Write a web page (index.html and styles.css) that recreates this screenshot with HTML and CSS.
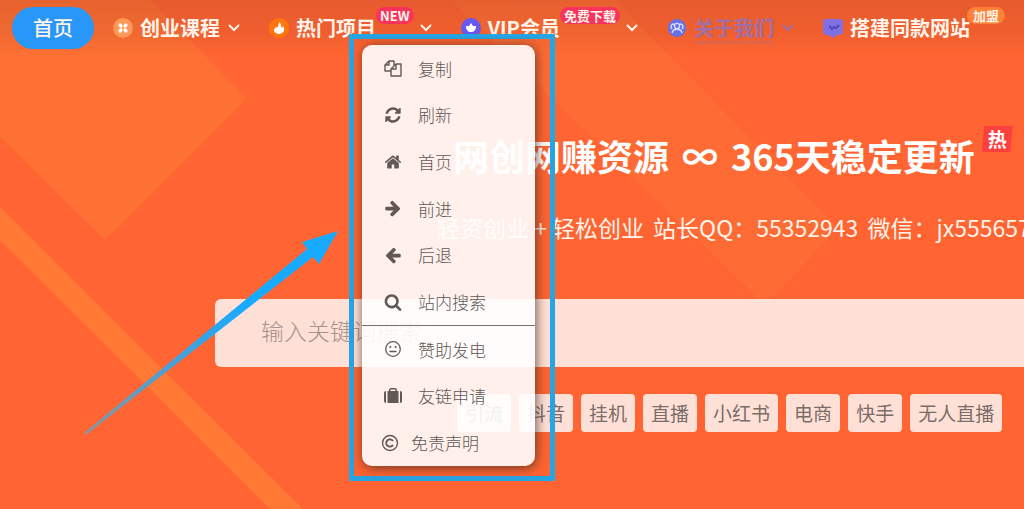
FILE: index.html
```html
<!DOCTYPE html>
<html lang="zh-CN">
<head>
<meta charset="utf-8">
<title>网创网赚资源</title>
<link rel="stylesheet" href="styles.css">
</head>
<body>
<svg class="backdrop" width="1024" height="509" viewBox="0 0 1024 509" aria-hidden="true">
  <path d="M0 0H150L247 98L105 240L0 137Z" fill="#ff7034"/>
  <path d="M0 207L303 509H270L0 240Z" fill="#ff7935"/>
  <path d="M450 0H615L838 228L766 306Z" fill="#ff6b34"/>
</svg>

<header class="topbar">
  <a class="home" href="#">首页</a>
  <nav>
    <ul class="menu">
      <li><a class="item" href="#">
        <svg class="icon" viewBox="0 0 20 20"><circle cx="10" cy="10" r="10" fill="#ff9857"/><path d="M7 7l1 1M13 7l-1 1M7 13l1-1M13 13l-1-1" stroke="#fff" stroke-width="3.2" stroke-linecap="round"/></svg>
        <span>创业课程</span>
        <svg class="chevron" viewBox="0 0 14 8"><path d="M2 1l5 5 5-5"/></svg></a></li>
      <li><a class="item" href="#">
        <svg class="icon" viewBox="0 0 20 20"><circle cx="10" cy="10" r="10" fill="#ff760c"/><path d="M10 4c4 3 1 5 3 6l1-2c3 4 0 8-4 8s-7-4-3-7l1 1c1-2 2-3 2-6z" fill="#fff"/></svg>
        <span>热门项目</span><em class="badge">NEW</em>
        <svg class="chevron" viewBox="0 0 14 8"><path d="M2 1l5 5 5-5"/></svg></a></li>
      <li><a class="item" href="#">
        <svg class="icon" viewBox="0 0 20 20"><circle cx="10" cy="10" r="10" fill="#6559ef"/><path d="M10 5l2 3 3 0c0 4-2 6-5 6s-5-2-5-6l3 0z" fill="#fff"/></svg>
        <span>VIP会员</span><em class="badge">免费下载</em>
        <svg class="chevron" viewBox="0 0 14 8"><path d="M2 1l5 5 5-5"/></svg></a></li>
      <li><a class="item current" href="#">
        <svg class="icon" viewBox="0 0 20 20"><circle cx="10" cy="10" r="9" fill="#6470e8"/><g fill="none" stroke="#dce0ff" stroke-width="1.3"><circle cx="10" cy="8" r="2.6"/><path d="M5 15c1-5 9-5 10 0M5 11c-2-2-1-5 2-5M15 11c2-2 1-5-2-5"/></g></svg>
        <span>关于我们</span>
        <svg class="chevron" viewBox="0 0 14 8"><path d="M2 1l5 5 5-5"/></svg></a></li>
      <li><a class="item" href="#">
        <svg class="icon" viewBox="0 0 20 20"><path d="M3 1h14q3 0 3 3v10q0 2-3 3h-3l-4 3-4-3H3q-3 0-3-3V4q0-3 3-3z" fill="#8070e2"/><path d="M6 8l3 3 2-2 2 1 3-3" fill="none" stroke="#5049c4" stroke-width="2"/></svg>
        <span>搭建同款网站</span><em class="badge join">加盟</em></a></li>
    </ul>
  </nav>
</header>

<main class="hero">
  <h1 class="title"><span>网创网赚资源</span><span>∞</span><span>365天稳定更新</span><em class="hot">热</em></h1>
  <p class="subtitle"><span>轻资创业 + 轻松创业</span><span>站长QQ：55352943</span><span>微信：jx555657</span></p>
  <form class="search"><input class="field" type="search" aria-label="搜索" placeholder="输入关键词搜索"></form>
  <div class="tags">
    <a href="#">引流</a><a href="#">抖音</a><a href="#">挂机</a><a href="#">直播</a><a href="#">小红书</a><a href="#">电商</a><a href="#">快手</a><a href="#">无人直播</a>
  </div>
</main>

<aside class="frame">
  <div class="context">
    <button type="button"><svg viewBox="0 0 18 18"><g fill="none" stroke="currentColor" stroke-width="1.4" stroke-linejoin="round"><path d="M7 12H1V6l4-4h5v4M5 2v4H1M12 5h5v12H7V10l5-5v5H7"/></g></svg>复制</button>
    <button type="button"><svg viewBox="0 0 1792 1792"><path fill="currentColor" d="M1639 1056q0 5-1 7-64 268-268 434.500t-478 166.500q-146 0-282.500-55t-243.500-157l-129 129q-19 19-45 19t-45-19-19-45v-448q0-26 19-45t45-19h448q26 0 45 19t19 45-19 45l-137 137q71 66 161 102t187 36q134 0 250-65t186-179q11-17 53-117 8-23 30-23h192q13 0 22.500 9.500t9.500 22.500zm25-800v448q0 26-19 45t-45 19h-448q-26 0-45-19t-19-45 19-45l138-138q-148-137-349-137-134 0-250 65t-186 179q-11 17-53 117-8 23-30 23h-199q-13 0-22.500-9.500t-9.500-22.500v-7q65-268 270-434.500t480-166.500q146 0 284 55.500t245 156.500l130-129q19-19 45-19t45 19 19 45z"/></svg>刷新</button>
    <button type="button"><svg viewBox="0 0 1792 1792"><path fill="currentColor" d="M1472 992v480q0 26-19 45t-45 19h-384v-384h-256v384h-384q-26 0-45-19t-19-45v-480q0-1 .5-3t.5-3l575-474 575 474q1 2 1 6zm223-69l-62 74q-8 9-21 11h-3q-13 0-21-7l-692-577-692 577q-12 8-24 7-13-2-21-11l-62-74q-8-10-7-23.500t11-21.500l719-599q32-26 76-26t76 26l244 204v-195q0-14 9-23t23-9h192q14 0 23 9t9 23v408l219 182q10 8 11 21.500t-7 23.500z"/></svg>首页</button>
    <button type="button"><svg viewBox="0 0 1792 1792"><path fill="currentColor" d="M1600 960q0 54-37 91l-651 651q-39 37-91 37-51 0-90-37l-75-75q-38-38-38-91t38-91l293-293h-704q-52 0-84.500-37.500t-32.500-90.500v-128q0-53 32.500-90.500t84.500-37.500h704l-293-294q-38-36-38-90t38-90l75-75q38-38 90-38 53 0 91 38l651 651q37 35 37 90z"/></svg>前进</button>
    <button type="button"><svg viewBox="0 0 1792 1792"><path fill="currentColor" transform="matrix(-1 0 0 1 1792 0)" d="M1600 960q0 54-37 91l-651 651q-39 37-91 37-51 0-90-37l-75-75q-38-38-38-91t38-91l293-293h-704q-52 0-84.500-37.500t-32.500-90.500v-128q0-53 32.500-90.500t84.500-37.500h704l-293-294q-38-36-38-90t38-90l75-75q38-38 90-38 53 0 91 38l651 651q37 35 37 90z"/></svg>后退</button>
    <button type="button"><svg viewBox="0 0 1792 1792"><path fill="currentColor" d="M1216 832q0-185-131.500-316.500t-316.500-131.500-316.500 131.500-131.500 316.500 131.500 316.500 316.500 131.500 316.500-131.500 131.500-316.500zm512 832q0 52-38 90t-90 38q-54 0-90-38l-343-342q-179 124-399 124-143 0-273.500-55.500t-225-150-150-225-55.500-273.500 55.500-273.500 150-225 225-150 273.500-55.500 273.500 55.500 225 150 150 225 55.500 273.500q0 220-124 399l343 343q37 37 37 90z"/></svg>站内搜索</button>
    <hr>
    <button type="button"><svg viewBox="0 0 18 18"><circle cx="9" cy="9" r="7.300" fill="none" stroke="currentColor" stroke-width="1.300"/><circle cx="6.300" cy="7" r="1.100" fill="currentColor"/><circle cx="11.700" cy="7" r="1.100" fill="currentColor"/><path d="M6 11.500h6" stroke="currentColor" stroke-width="1.400" stroke-linecap="round"/></svg>赞助发电</button>
    <button type="button"><svg viewBox="0 0 18 18"><g fill="currentColor"><path d="M2 4v12q-2 0-2-2V6q0-2 2-2zM16 4v12q2 0 2-2V6q0-2-2-2z"/><path fill-rule="evenodd" d="M3.500 4H5V3q0-2 2-2h4q2 0 2 2v1h1.500v12h-11zM6.500 4h5V2.500h-5z"/></g></svg>友链申请</button>
    <button type="button" class="legal"><svg viewBox="0 0 18 18"><g fill="none" stroke="currentColor"><circle cx="9" cy="9" r="7.500" stroke-width="1.400"/><path d="M12 7a3.700 3.700 0 1 0 0 4" stroke-width="1.800"/></g></svg>免责声明</button>
  </div>
</aside>

<svg class="pointer" width="260" height="210" viewBox="80 228 260 210" aria-hidden="true">
  <defs><linearGradient id="fade" x1="84" y1="433" x2="240" y2="300" gradientUnits="userSpaceOnUse"><stop offset="0" stop-color="#8797a2"/><stop offset="0.5" stop-color="#4f9fd0"/><stop offset="1" stop-color="#18aaff"/></linearGradient></defs>
  <path d="M338 231L302 242L307 249L84 433L87 434L313 257L319 264Z" fill="url(#fade)"/>
</svg>
</body>
</html>
```

FILE: styles.css
```css
* {
  box-sizing: border-box;
}

body {
  position: relative;
  min-height: 100vh;
  margin: 0;
  overflow: hidden;
  background: #ff6432;
  color: #fff3ea;
  font-family: "Noto Sans CJK SC", sans-serif;
}

a {
  color: inherit;
  text-decoration: none;
}

em {
  font-style: normal;
}

.backdrop {
  position: absolute;
  inset: 0;
  z-index: -1;
}

.topbar {
  display: flex;
  align-items: center;
  gap: 19px;
  height: 56px;
  padding-left: 12px;
  background: linear-gradient(rgba(150, 60, 30, .24), rgba(150, 60, 30, .14) 60%, transparent);
  font-size: 20px;
  font-weight: 700;
  line-height: 24px;
  white-space: nowrap;
}

.home {
  padding: 9px 21px;
  border-radius: 22px;
  background: #2997f7;
  font-weight: 500;
}

.menu {
  display: flex;
  gap: 28px;
  margin: 0;
  padding: 0;
  list-style: none;
}

.item {
  display: flex;
  align-items: center;
  min-height: 43px;
}

.icon {
  width: 20px;
  height: 20px;
  margin-right: 7px;
}

.chevron {
  width: 14px;
  height: 8px;
  margin-left: 7px;
  fill: none;
  stroke: currentColor;
  stroke-width: 2;
}

.badge {
  margin-bottom: 26px;
  padding: 0 4px;
  border-radius: 9px;
  background: #fa325c;
  font-size: 13px;
  line-height: 17px;
}

.badge + .chevron {
  margin-left: 5px;
}

.badge.join {
  margin-left: -3px;
  padding: 0 6px;
  background: #ff8136;
}

.current span,
.current .chevron {
  color: #a06fa6;
}

.current span {
  text-decoration: underline wavy 1px #a3698c;
  text-underline-offset: 4px;
}

.hero {
  padding: 70px 0 76px 21%;
}

.title {
  display: flex;
  align-items: center;
  gap: 13px;
  margin: 0;
  padding-left: 238px;
  color: #fff;
  font-size: 36px;
  line-height: 58px;
  white-space: nowrap;
}

.hot {
  margin: 0 0 32px -6px;
  padding: 0 6px;
  background: #fb403e;
  clip-path: polygon(8% 0, 100% 0, 92% 100%, 0 100%);
  font-size: 19px;
  line-height: 26px;
}

.subtitle {
  display: flex;
  gap: 9px;
  margin: 25px 0 0;
  padding-left: 222px;
  font-size: 23px;
  line-height: 36px;
  white-space: nowrap;
}

.search {
  margin: 54px 0 27px;
}

.field {
  display: block;
  width: 100%;
  height: 68px;
  padding: 0 46px 6px;
  border: 0;
  border-radius: 6px 0 0 6px;
  background: rgba(255, 255, 255, .8);
  color: #6d625f;
  font: 23px "Noto Sans CJK SC", sans-serif;
}

.field::placeholder {
  color: #a5928c;
  font-weight: 300;
}

.tags {
  display: flex;
  gap: 8px;
  padding-left: 242px;
  color: #7a6d68;
  font-size: 19px;
  line-height: 38px;
  white-space: nowrap;
}

.tags a {
  padding: 0 8px;
  border-radius: 4px;
  background: rgba(255, 255, 255, .8);
}

.frame {
  position: absolute;
  top: 34px;
  left: 349px;
  padding: 6px 15px 10px 8px;
  border: 5px solid #26a5e4;
}

.context {
  display: grid;
  grid-template-rows: repeat(6, 1fr) 1px repeat(3, 1fr);
  width: 173px;
  height: 421px;
  overflow: hidden;
  border-radius: 10px;
  background: rgba(255, 255, 255, .9);
  box-shadow: 1px 2px 12px rgba(70, 45, 35, .8);
}

.context button {
  display: flex;
  align-items: center;
  gap: 16px;
  padding: 0 22px;
  border: 0;
  background: none;
  color: #625855;
  font: 300 17px "Noto Sans CJK SC", sans-serif;
}

.context svg {
  width: 18px;
  height: 18px;
}

.context .legal {
  gap: 12px;
  padding-left: 19px;
}

.context hr {
  width: 100%;
  margin: 0;
  border: 0;
  background: #77706e;
}

.pointer {
  position: absolute;
  top: 228px;
  left: 80px;
}
```
